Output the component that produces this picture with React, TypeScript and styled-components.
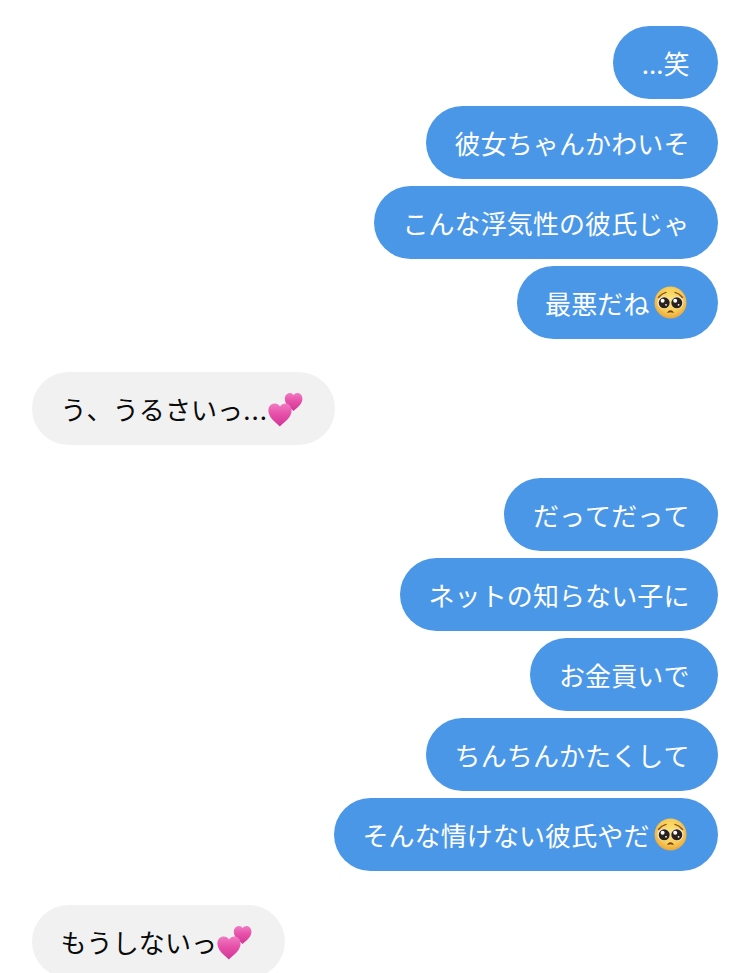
import React from "react";
import styled, { createGlobalStyle } from "styled-components";

const Global = createGlobalStyle`
  html, body { margin: 0; padding: 0; background: #fff; }
  body { overflow: hidden; height: 973px; }
`;

const Page = styled.main`
  width: 750px;
  height: 973px;
  overflow: hidden;
  box-sizing: border-box;
  padding: 26px 32px 0;
  display: flex;
  flex-direction: column;
  gap: 33px;
  font-family: "Noto Sans CJK JP", "Noto Sans", sans-serif;
`;

const Group = styled.section<{ $mine?: boolean; $late?: boolean }>`
  display: flex;
  flex-direction: column;
  gap: 7px;
  margin-top: ${(p) => (p.$late ? "1px" : "0")};
  align-items: ${(p) => (p.$mine ? "flex-end" : "flex-start")};
`;

const Bubble = styled.div<{ $mine?: boolean }>`
  height: 73px;
  flex: none;
  box-sizing: border-box;
  padding: 0 28.5px;
  border-radius: 36.5px;
  display: flex;
  align-items: center;
  white-space: nowrap;
  font-size: 26px;
  line-height: 36px;
  font-kerning: none;
  letter-spacing: 0.1px;
  background: ${(p) => (p.$mine ? "#4a97e8" : "#f1f1f1")};
  color: ${(p) => (p.$mine ? "#ffffff" : "#0a0a0a")};
`;

const Dots = styled.span<{ $spread?: boolean }>`
  letter-spacing: ${(p) => (p.$spread ? "1px" : "0")};
`;

const EmojiSvg = styled.svg<{ $left: number; $right: number; $top: number }>`
  flex: none;
  display: block;
  margin: ${(p) => p.$top}px ${(p) => p.$right}px 0 ${(p) => p.$left}px;
`;

const Pleading = () => (
  <EmojiSvg $left={4} $right={3} $top={0} width="33" height="33" viewBox="0 0 33 33" aria-hidden="true">
    <defs>
      <radialGradient id="faceFill" cx="50%" cy="42%" r="60%">
        <stop offset="0%" stopColor="#fde57c" />
        <stop offset="60%" stopColor="#f8cf58" />
        <stop offset="100%" stopColor="#e8a238" />
      </radialGradient>
    </defs>
    <circle cx="16.5" cy="16.5" r="16" fill="url(#faceFill)" />
    <path d="M4.5 11.5 C6.5 8.8 9 7.2 12 6.4" stroke="#8f5420" strokeWidth="1.5" fill="none" strokeLinecap="round" />
    <path d="M28.5 11.5 C26.5 8.8 24 7.2 21 6.4" stroke="#8f5420" strokeWidth="1.5" fill="none" strokeLinecap="round" />
    <circle cx="9.8" cy="16.6" r="6.2" fill="#f3efe6" />
    <circle cx="23.2" cy="16.6" r="6.2" fill="#f3efe6" />
    <circle cx="10.2" cy="16.8" r="5.5" fill="#2a211d" />
    <circle cx="22.8" cy="16.8" r="5.5" fill="#2a211d" />
    <circle cx="8.6" cy="14.8" r="2" fill="#fff" />
    <circle cx="21.2" cy="14.8" r="2" fill="#fff" />
    <circle cx="12" cy="18.8" r="0.9" fill="#fff" />
    <circle cx="24.6" cy="18.8" r="0.9" fill="#fff" />
    <path d="M13.6 26.4 C14.6 24.3 18.4 24.3 19.4 26.4 C17.8 25.7 15.2 25.7 13.6 26.4 Z" fill="#7a3a18" stroke="#7a3a18" strokeWidth="0.8" strokeLinejoin="round" />
  </EmojiSvg>
);

const Hearts = () => (
  <EmojiSvg $left={0} $right={4} $top={2} width="35" height="35" viewBox="0 0 35 35" aria-hidden="true">
    <defs>
      <linearGradient id="heartFill" x1="0" y1="0" x2="0" y2="1">
        <stop offset="0%" stopColor="#f07cc2" />
        <stop offset="45%" stopColor="#e750a9" />
        <stop offset="100%" stopColor="#d23597" />
      </linearGradient>
    </defs>
    <path
      d="M25.6 19 C22.2 15.8 16.8 12.4 16.8 6.8 C16.8 3.4 19.2 1 22 1 C23.6 1 24.8 1.8 25.6 3.2 C26.4 1.8 27.7 1 29.4 1 C32.2 1 34.4 3.4 34.4 6.8 C34.4 12.4 29 15.8 25.6 19 Z"
      fill="url(#heartFill)"
    />
    <path
      d="M11.8 34.4 C7.2 29.8 0.4 25.4 0.4 18.4 C0.4 14 3.6 11.4 6.8 11.4 C9 11.4 10.8 12.4 12 14.4 C13.2 12.4 15 11.4 17.4 11.4 C20.8 11.4 23.6 14.2 23.6 18.4 C23.6 25.4 16.6 29.8 11.8 34.4 Z"
      fill="url(#heartFill)"
    />
  </EmojiSvg>
);

export default function App() {
  return (
    <>
      <Global />
      <Page>
        <Group $mine>
          <Bubble $mine><Dots>...</Dots>笑</Bubble>
          <Bubble $mine>彼女ちゃんかわいそ</Bubble>
          <Bubble $mine>こんな浮気性の彼氏じゃ</Bubble>
          <Bubble $mine>最悪だね<Pleading /></Bubble>
        </Group>
        <Group>
          <Bubble>う、うるさいっ<Dots $spread>...</Dots><Hearts /></Bubble>
        </Group>
        <Group $mine>
          <Bubble $mine>だってだって</Bubble>
          <Bubble $mine>ネットの知らない子に</Bubble>
          <Bubble $mine>お金貢いで</Bubble>
          <Bubble $mine>ちんちんかたくして</Bubble>
          <Bubble $mine>そんな情けない彼氏やだ<Pleading /></Bubble>
        </Group>
        <Group $late>
          <Bubble>もうしないっ<Hearts /></Bubble>
        </Group>
      </Page>
    </>
  );
}
